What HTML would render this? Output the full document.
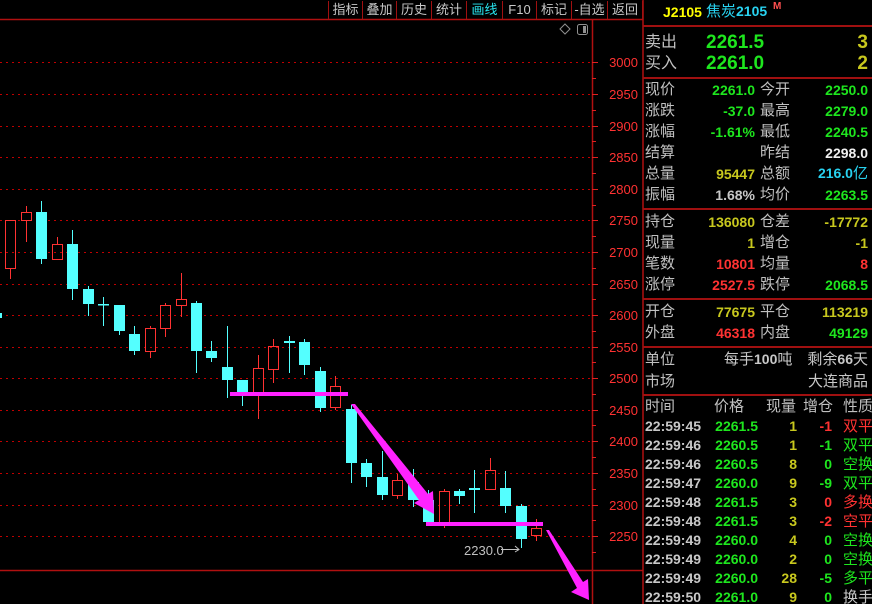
<!DOCTYPE html>
<html><head><meta charset="utf-8"><style>
*{margin:0;padding:0;box-sizing:border-box}
html,body{width:872px;height:604px;overflow:hidden}
body{background:#000;position:relative;font-family:"Liberation Sans","Noto Sans CJK SC",sans-serif;white-space:nowrap}
.t{position:absolute;white-space:nowrap;line-height:1}
.tb{position:absolute;top:1px;height:18px;font-size:13px;color:#c8c8c8;text-align:center;line-height:17px}
.lb{position:absolute;left:645px;font-size:15px;color:#c0c0c0;line-height:1}
.l2{position:absolute;left:760px;font-size:15px;color:#c0c0c0;line-height:1}
.v1{position:absolute;right:117px;font-size:14px;font-weight:bold;line-height:1;text-align:right}
.v2{position:absolute;right:4px;font-size:14px;font-weight:bold;line-height:1;text-align:right}
.g{color:#1ee61e}.y{color:#c8c81e}.r{color:#ff3232}.w{color:#f0f0f0}.c{color:#28d2f0}.s{color:#c8c8c8}
.hl{position:absolute;left:643px;width:229px;height:2px;background:#a01010}
.tr{position:absolute;left:645px;width:227px;height:16px;font-size:14px;line-height:1;font-weight:bold}
.tr span{position:absolute;white-space:nowrap;top:0}
</style></head><body>
<svg width="872" height="604" style="position:absolute;left:0;top:0">
<g stroke="#c00000" stroke-width="1" stroke-dasharray="2,4">
<line x1="0" y1="62.5" x2="592" y2="62.5"/><line x1="0" y1="94.5" x2="592" y2="94.5"/><line x1="0" y1="126.5" x2="592" y2="126.5"/><line x1="0" y1="157.5" x2="592" y2="157.5"/><line x1="0" y1="189.5" x2="592" y2="189.5"/><line x1="0" y1="220.5" x2="592" y2="220.5"/><line x1="0" y1="252.5" x2="592" y2="252.5"/><line x1="0" y1="284.5" x2="592" y2="284.5"/><line x1="0" y1="315.5" x2="592" y2="315.5"/><line x1="0" y1="347.5" x2="592" y2="347.5"/><line x1="0" y1="378.5" x2="592" y2="378.5"/><line x1="0" y1="410.5" x2="592" y2="410.5"/><line x1="0" y1="441.5" x2="592" y2="441.5"/><line x1="0" y1="473.5" x2="592" y2="473.5"/><line x1="0" y1="505.5" x2="592" y2="505.5"/><line x1="0" y1="536.5" x2="592" y2="536.5"/>
</g>
<g stroke="#b01010" stroke-width="1.5">
<line x1="0" y1="19.5" x2="643" y2="19.5"/>
<line x1="592.5" y1="19" x2="592.5" y2="604"/>
<line x1="0" y1="570.5" x2="643" y2="570.5"/>
<line x1="643" y1="0" x2="643" y2="604"/>
</g>
<g stroke="#e02020" stroke-width="1">
<line x1="592" y1="62.5" x2="598" y2="62.5"/><line x1="592" y1="78.5" x2="596" y2="78.5"/><line x1="592" y1="94.5" x2="598" y2="94.5"/><line x1="592" y1="110.5" x2="596" y2="110.5"/><line x1="592" y1="126.5" x2="598" y2="126.5"/><line x1="592" y1="141.5" x2="596" y2="141.5"/><line x1="592" y1="157.5" x2="598" y2="157.5"/><line x1="592" y1="173.5" x2="596" y2="173.5"/><line x1="592" y1="189.5" x2="598" y2="189.5"/><line x1="592" y1="205.5" x2="596" y2="205.5"/><line x1="592" y1="220.5" x2="598" y2="220.5"/><line x1="592" y1="236.5" x2="596" y2="236.5"/><line x1="592" y1="252.5" x2="598" y2="252.5"/><line x1="592" y1="268.5" x2="596" y2="268.5"/><line x1="592" y1="284.5" x2="598" y2="284.5"/><line x1="592" y1="299.5" x2="596" y2="299.5"/><line x1="592" y1="315.5" x2="598" y2="315.5"/><line x1="592" y1="331.5" x2="596" y2="331.5"/><line x1="592" y1="347.5" x2="598" y2="347.5"/><line x1="592" y1="362.5" x2="596" y2="362.5"/><line x1="592" y1="378.5" x2="598" y2="378.5"/><line x1="592" y1="394.5" x2="596" y2="394.5"/><line x1="592" y1="410.5" x2="598" y2="410.5"/><line x1="592" y1="425.5" x2="596" y2="425.5"/><line x1="592" y1="441.5" x2="598" y2="441.5"/><line x1="592" y1="457.5" x2="596" y2="457.5"/><line x1="592" y1="473.5" x2="598" y2="473.5"/><line x1="592" y1="489.5" x2="596" y2="489.5"/><line x1="592" y1="505.5" x2="598" y2="505.5"/><line x1="592" y1="520.5" x2="596" y2="520.5"/><line x1="592" y1="536.5" x2="598" y2="536.5"/><line x1="592" y1="552.5" x2="596" y2="552.5"/>
</g>
<g font-family="Liberation Sans,sans-serif" font-size="13" fill="#ff3232" text-anchor="end">
<text x="638" y="67">3000</text><text x="638" y="99">2950</text><text x="638" y="131">2900</text><text x="638" y="162">2850</text><text x="638" y="194">2800</text><text x="638" y="225">2750</text><text x="638" y="257">2700</text><text x="638" y="289">2650</text><text x="638" y="320">2600</text><text x="638" y="352">2550</text><text x="638" y="383">2500</text><text x="638" y="415">2450</text><text x="638" y="446">2400</text><text x="638" y="478">2350</text><text x="638" y="510">2300</text><text x="638" y="541">2250</text>
</g>
<path d="M565 24 L570 29 L565 34 L560 29 Z" fill="none" stroke="#909090"/>
<rect x="577.5" y="24.5" width="10" height="10" rx="2" fill="none" stroke="#909090"/>
<rect x="583" y="26" width="3" height="7" fill="#909090"/>
<g stroke="#54ffff" fill="#54ffff" stroke-width="1">
<rect x="0" y="313" width="2" height="5" stroke="none"/>
<line x1="41.5" y1="201" x2="41.5" y2="264"/><rect x="36" y="212" width="11" height="47" stroke="none"/>
<line x1="72.5" y1="230" x2="72.5" y2="300"/><rect x="67" y="244" width="11" height="45" stroke="none"/>
<line x1="88.5" y1="286" x2="88.5" y2="316"/><rect x="83" y="289" width="11" height="15" stroke="none"/>
<line x1="103.5" y1="297" x2="103.5" y2="326"/><rect x="98" y="304" width="11" height="1.5" stroke="none"/>
<line x1="119.5" y1="305" x2="119.5" y2="335"/><rect x="114" y="305" width="11" height="26" stroke="none"/>
<line x1="134.5" y1="326" x2="134.5" y2="355"/><rect x="129" y="334" width="11" height="17" stroke="none"/>
<line x1="196.5" y1="301" x2="196.5" y2="373"/><rect x="191" y="303" width="11" height="48" stroke="none"/>
<line x1="211.5" y1="341" x2="211.5" y2="362"/><rect x="206" y="351" width="11" height="7" stroke="none"/>
<line x1="227.5" y1="326" x2="227.5" y2="398"/><rect x="222" y="367" width="11" height="13" stroke="none"/>
<line x1="242.5" y1="380" x2="242.5" y2="406"/><rect x="237" y="380" width="11" height="13" stroke="none"/>
<line x1="289.5" y1="336" x2="289.5" y2="373"/><rect x="284" y="341" width="11" height="2" stroke="none"/>
<line x1="304.5" y1="339" x2="304.5" y2="375"/><rect x="299" y="342" width="11" height="23" stroke="none"/>
<line x1="320.5" y1="367" x2="320.5" y2="412"/><rect x="315" y="371" width="11" height="37" stroke="none"/>
<line x1="351.5" y1="405" x2="351.5" y2="483"/><rect x="346" y="409" width="11" height="54" stroke="none"/>
<line x1="366.5" y1="459" x2="366.5" y2="487"/><rect x="361" y="463" width="11" height="14" stroke="none"/>
<line x1="382.5" y1="451" x2="382.5" y2="500"/><rect x="377" y="477" width="11" height="18" stroke="none"/>
<line x1="413.5" y1="469" x2="413.5" y2="507"/><rect x="408" y="482" width="11" height="18" stroke="none"/>
<line x1="428.5" y1="490" x2="428.5" y2="525"/><rect x="423" y="500" width="11" height="22" stroke="none"/>
<line x1="459.5" y1="489" x2="459.5" y2="504"/><rect x="454" y="491" width="11" height="5" stroke="none"/>
<line x1="474.5" y1="470" x2="474.5" y2="513"/><rect x="469" y="488" width="11" height="2" stroke="none"/>
<line x1="505.5" y1="471" x2="505.5" y2="513"/><rect x="500" y="488" width="11" height="18" stroke="none"/>
<line x1="521.5" y1="504" x2="521.5" y2="548"/><rect x="516" y="506" width="11" height="33" stroke="none"/>
</g>
<g stroke="#ff3232" fill="none" stroke-width="1">
<rect x="5.5" y="220.5" width="10" height="48"/><line x1="10.5" y1="269" x2="10.5" y2="279"/>
<rect x="21.5" y="212.5" width="10" height="8"/><line x1="26.5" y1="206" x2="26.5" y2="212"/><line x1="26.5" y1="221" x2="26.5" y2="242"/>
<rect x="52.5" y="244.5" width="10" height="15"/><line x1="57.5" y1="237" x2="57.5" y2="244"/>
<rect x="145.5" y="328.5" width="10" height="23"/><line x1="150.5" y1="326" x2="150.5" y2="328"/><line x1="150.5" y1="352" x2="150.5" y2="358"/>
<rect x="160.5" y="305.5" width="10" height="23"/><line x1="165.5" y1="303" x2="165.5" y2="305"/><line x1="165.5" y1="329" x2="165.5" y2="337"/>
<rect x="176.5" y="299.5" width="10" height="6"/><line x1="181.5" y1="273" x2="181.5" y2="299"/><line x1="181.5" y1="306" x2="181.5" y2="317"/>
<rect x="253.5" y="368.5" width="10" height="25"/><line x1="258.5" y1="355" x2="258.5" y2="368"/><line x1="258.5" y1="394" x2="258.5" y2="419"/>
<rect x="268.5" y="346.5" width="10" height="23"/><line x1="273.5" y1="339" x2="273.5" y2="346"/><line x1="273.5" y1="370" x2="273.5" y2="383"/>
<rect x="330.5" y="386.5" width="10" height="21"/><line x1="335.5" y1="376" x2="335.5" y2="386"/><line x1="335.5" y1="408" x2="335.5" y2="410"/>
<rect x="392.5" y="480.5" width="10" height="15"/><line x1="397.5" y1="474" x2="397.5" y2="480"/><line x1="397.5" y1="496" x2="397.5" y2="499"/>
<rect x="439.5" y="491.5" width="10" height="31"/><line x1="444.5" y1="489" x2="444.5" y2="491"/><line x1="444.5" y1="523" x2="444.5" y2="528"/>
<rect x="485.5" y="470.5" width="10" height="19"/><line x1="490.5" y1="458" x2="490.5" y2="470"/>
<rect x="531.5" y="528.5" width="10" height="7"/><line x1="536.5" y1="519" x2="536.5" y2="528"/><line x1="536.5" y1="536" x2="536.5" y2="541"/>
</g>
<rect x="230" y="392" width="118" height="4" fill="#ff22ff"/>
<rect x="426" y="522" width="117" height="4" fill="#ff22ff"/>
<polygon points="351,404 355,404 428,494 433,491 434,514 414,503 419,500" fill="#ff22ff"/>
<polygon points="546,530 549,530 583,582 588,579 589,600 571,592 577,588" fill="#ff22ff"/>
<text x="464" y="555" font-family="Liberation Sans,sans-serif" font-size="13" fill="#c0c0c0">2230.0</text>
<line x1="501" y1="549.5" x2="519" y2="549.5" stroke="#c0c0c0"/>
<path d="M515 546 L519 549.5 L515 552" stroke="#c0c0c0" fill="none"/>
</svg>

<div class="tb" style="left:328px;width:34px;border-left:1px solid #a01010">指标</div>
<div class="tb" style="left:362px;width:34px;border-left:1px solid #a01010">叠加</div>
<div class="tb" style="left:396px;width:35px;border-left:1px solid #a01010">历史</div>
<div class="tb" style="left:431px;width:35px;border-left:1px solid #a01010">统计</div>
<div class="tb" style="left:466px;width:36px;border-left:1px solid #a01010;color:#28e6f0">画线</div>
<div class="tb" style="left:502px;width:34px;border-left:1px solid #a01010">F10</div>
<div class="tb" style="left:536px;width:35px;border-left:1px solid #a01010">标记</div>
<div class="tb" style="left:571px;width:36px;border-left:1px solid #a01010">-自选</div>
<div class="tb" style="left:607px;width:36px;border-left:1px solid #a01010;border-right:1px solid #a01010">返回</div>

<div class="t" style="left:663px;top:5px;font-size:14px;font-weight:bold;color:#ffff00">J2105</div>
<div class="t" style="left:706px;top:4px;font-size:15px;color:#28d2f0">焦炭<b style="font-size:14px">2105</b></div>
<div class="t" style="left:773px;top:2px;font-size:10px;font-weight:bold;color:#ff5050">M</div>
<div class="hl" style="top:25px"></div>
<div class="lb" style="top:35px;font-size:16px">卖出</div>
<div class="t g" style="left:706px;top:33px;font-size:19px;font-weight:bold">2261.5</div>
<div class="t y" style="right:4px;top:33px;font-size:19px;font-weight:bold">3</div>
<div class="lb" style="top:56px;font-size:16px">买入</div>
<div class="t g" style="left:706px;top:54px;font-size:19px;font-weight:bold">2261.0</div>
<div class="t y" style="right:4px;top:54px;font-size:19px;font-weight:bold">2</div>
<div class="hl" style="top:77px"></div>

<div class="lb" style="top:82px">现价</div><div class="v1 g" style="top:83px">2261.0</div><div class="l2" style="top:82px">今开</div><div class="v2 g" style="top:83px">2250.0</div>
<div class="lb" style="top:103px">涨跌</div><div class="v1 g" style="top:104px">-37.0</div><div class="l2" style="top:103px">最高</div><div class="v2 g" style="top:104px">2279.0</div>
<div class="lb" style="top:124px">涨幅</div><div class="v1 g" style="top:125px">-1.61%</div><div class="l2" style="top:124px">最低</div><div class="v2 g" style="top:125px">2240.5</div>
<div class="lb" style="top:145px">结算</div><div class="l2" style="top:145px">昨结</div><div class="v2 w" style="top:146px">2298.0</div>
<div class="lb" style="top:166px">总量</div><div class="v1 y" style="top:167px">95447</div><div class="l2" style="top:166px">总额</div><div class="v2 c" style="top:166px">216.0<span style="font-weight:normal;font-size:15px">亿</span></div>
<div class="lb" style="top:187px">振幅</div><div class="v1 s" style="top:188px">1.68%</div><div class="l2" style="top:187px">均价</div><div class="v2 g" style="top:188px">2263.5</div>
<div class="hl" style="top:208px"></div>
<div class="lb" style="top:214px">持仓</div><div class="v1 y" style="top:215px">136080</div><div class="l2" style="top:214px">仓差</div><div class="v2 y" style="top:215px">-17772</div>
<div class="lb" style="top:235px">现量</div><div class="v1 y" style="top:236px">1</div><div class="l2" style="top:235px">增仓</div><div class="v2 y" style="top:236px">-1</div>
<div class="lb" style="top:256px">笔数</div><div class="v1 r" style="top:257px">10801</div><div class="l2" style="top:256px">均量</div><div class="v2 r" style="top:257px">8</div>
<div class="lb" style="top:277px">涨停</div><div class="v1 r" style="top:278px">2527.5</div><div class="l2" style="top:277px">跌停</div><div class="v2 g" style="top:278px">2068.5</div>
<div class="hl" style="top:298px"></div>
<div class="lb" style="top:304px">开仓</div><div class="v1 y" style="top:305px">77675</div><div class="l2" style="top:304px">平仓</div><div class="v2 y" style="top:305px">113219</div>
<div class="lb" style="top:325px">外盘</div><div class="v1 r" style="top:326px">46318</div><div class="l2" style="top:325px">内盘</div><div class="v2 g" style="top:326px">49129</div>
<div class="hl" style="top:346px"></div>
<div class="lb" style="top:352px">单位</div><div class="t s" style="left:724px;top:352px;font-size:15px">每手<b style="font-size:14px">100</b>吨</div><div class="t s" style="right:4px;top:352px;font-size:15px">剩余<b style="font-size:14px">66</b>天</div>
<div class="lb" style="top:374px">市场</div><div class="t s" style="right:4px;top:374px;font-size:15px">大连商品</div>
<div class="hl" style="top:394px"></div>

<div class="tr" style="top:399px;font-weight:normal;font-size:15px;color:#c0c0c0"><span style="left:0">时间</span><span style="left:69px">价格</span><span style="left:121px">现量</span><span style="left:158px">增仓</span><span style="left:198px">性质</span></div>
<div class="tr" style="top:419px"><span class="s" style="left:0">22:59:45</span><span class="g" style="right:114px">2261.5</span><span class="y" style="right:75px">1</span><span class="r" style="right:40px">-1</span><span class="r" style="left:198px;font-weight:normal;font-size:15px">双平</span></div>
<div class="tr" style="top:438px"><span class="s" style="left:0">22:59:46</span><span class="g" style="right:114px">2260.5</span><span class="y" style="right:75px">1</span><span class="g" style="right:40px">-1</span><span class="g" style="left:198px;font-weight:normal;font-size:15px">双平</span></div>
<div class="tr" style="top:457px"><span class="s" style="left:0">22:59:46</span><span class="g" style="right:114px">2260.5</span><span class="y" style="right:75px">8</span><span class="g" style="right:40px">0</span><span class="g" style="left:198px;font-weight:normal;font-size:15px">空换</span></div>
<div class="tr" style="top:476px"><span class="s" style="left:0">22:59:47</span><span class="g" style="right:114px">2260.0</span><span class="y" style="right:75px">9</span><span class="g" style="right:40px">-9</span><span class="g" style="left:198px;font-weight:normal;font-size:15px">双平</span></div>
<div class="tr" style="top:495px"><span class="s" style="left:0">22:59:48</span><span class="g" style="right:114px">2261.5</span><span class="y" style="right:75px">3</span><span class="r" style="right:40px">0</span><span class="r" style="left:198px;font-weight:normal;font-size:15px">多换</span></div>
<div class="tr" style="top:514px"><span class="s" style="left:0">22:59:48</span><span class="g" style="right:114px">2261.5</span><span class="y" style="right:75px">3</span><span class="r" style="right:40px">-2</span><span class="r" style="left:198px;font-weight:normal;font-size:15px">空平</span></div>
<div class="tr" style="top:533px"><span class="s" style="left:0">22:59:49</span><span class="g" style="right:114px">2260.0</span><span class="y" style="right:75px">4</span><span class="g" style="right:40px">0</span><span class="g" style="left:198px;font-weight:normal;font-size:15px">空换</span></div>
<div class="tr" style="top:552px"><span class="s" style="left:0">22:59:49</span><span class="g" style="right:114px">2260.0</span><span class="y" style="right:75px">2</span><span class="g" style="right:40px">0</span><span class="g" style="left:198px;font-weight:normal;font-size:15px">空换</span></div>
<div class="tr" style="top:571px"><span class="s" style="left:0">22:59:49</span><span class="g" style="right:114px">2260.0</span><span class="y" style="right:75px">28</span><span class="g" style="right:40px">-5</span><span class="g" style="left:198px;font-weight:normal;font-size:15px">多平</span></div>
<div class="tr" style="top:590px"><span class="s" style="left:0">22:59:50</span><span class="g" style="right:114px">2261.0</span><span class="y" style="right:75px">9</span><span class="g" style="right:40px">0</span><span class="s" style="left:198px;font-weight:normal;font-size:15px">换手</span></div>
</body></html>
